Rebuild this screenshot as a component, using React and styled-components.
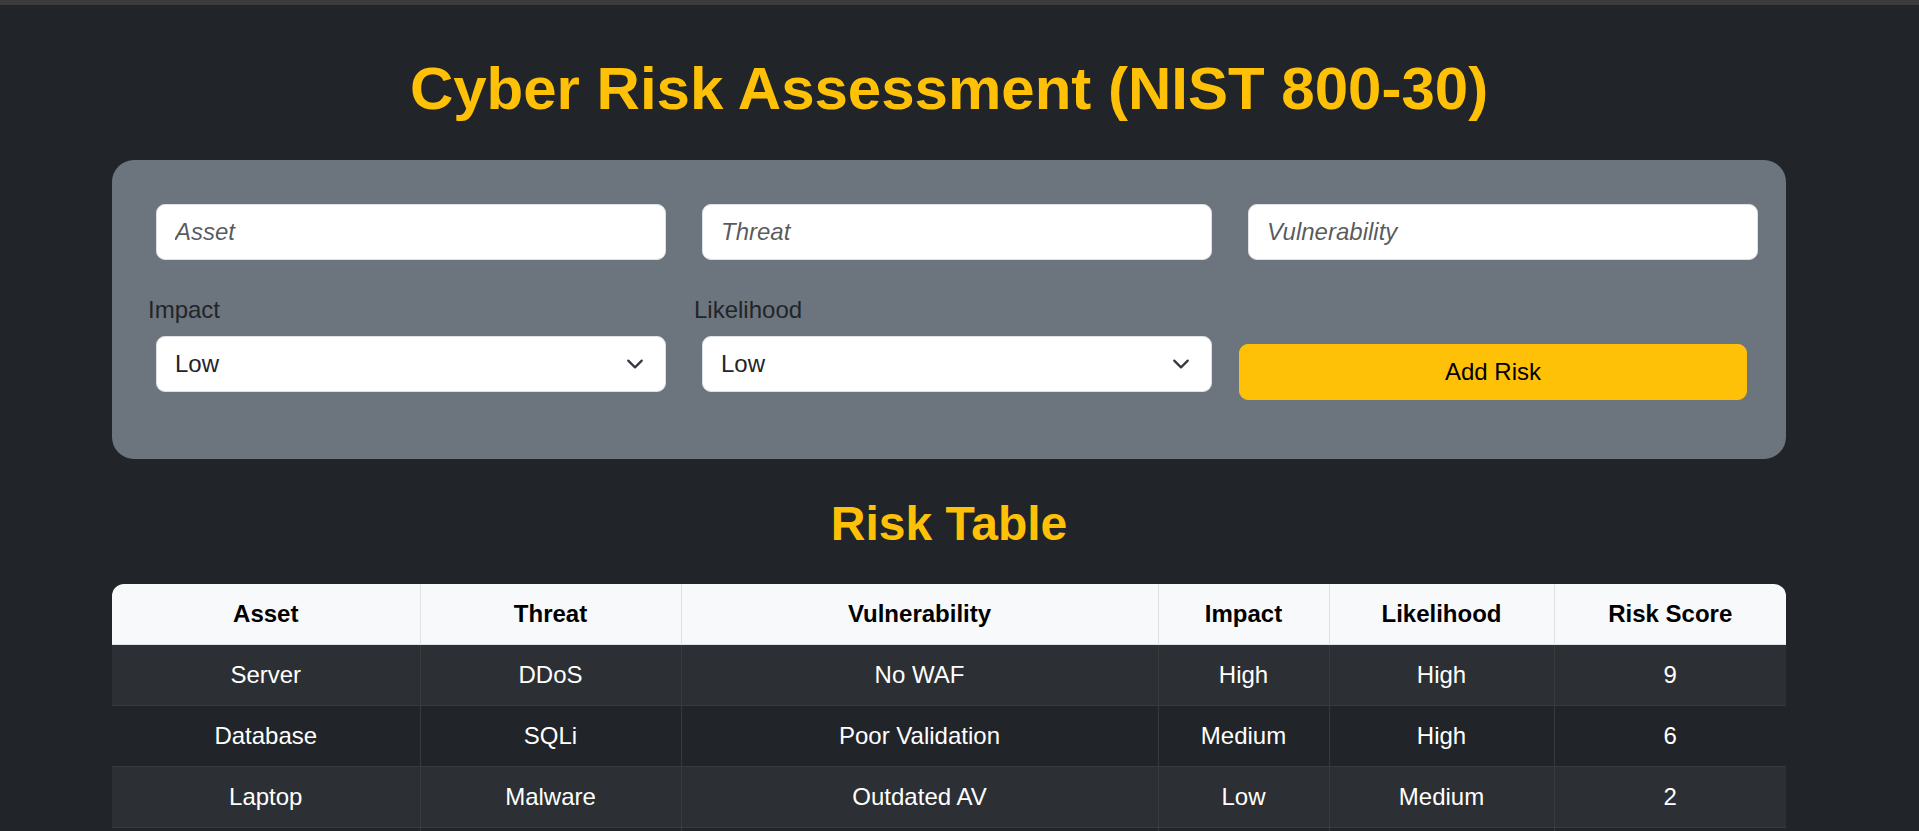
import React from "react";
import styled, { createGlobalStyle } from "styled-components";

const GlobalStyle = createGlobalStyle`
  html {
    color-scheme: dark;
    background: #212529;
  }
  body {
    margin: 0;
    background: #212529;
    font-family: "Liberation Sans", Arial, Helvetica, sans-serif;
  }
  *, *::before, *::after {
    box-sizing: border-box;
  }
`;

const Page = styled.div`
  min-height: 1776px;
  border-top: 5px solid #3c3c3c;
  background: #212529;
`;

const Container = styled.main`
  width: 1674px;
  margin-left: 112px;
`;

const Title = styled.h1`
  margin: 48px 0 35px;
  font-size: 60px;
  line-height: 72px;
  font-weight: 700;
  color: #ffc107;
  text-align: center;
`;

const Panel = styled.section`
  background: #6c757d;
  border-radius: 22px;
  padding: 36px 36px 59px;
`;

const FormGrid = styled.div`
  display: grid;
  grid-template-columns: repeat(3, 1fr);
  column-gap: 36px;
  row-gap: 24px;
  align-items: end;
`;

const controlBase = `
  display: block;
  width: 100%;
  height: 56px;
  padding: 9px 18px;
  font-family: "Liberation Sans", Arial, Helvetica, sans-serif;
  font-size: 24px;
  line-height: 36px;
  color: #212529;
  background: #ffffff;
  border: 1px solid #dee2e6;
  border-radius: 9px;
  outline: none;
  color-scheme: light;
`;

const TextInput = styled.input`
  ${controlBase}
  margin: 8px;
  &::placeholder {
    color: rgba(33, 37, 41, 0.75);
    font-style: italic;
  }
`;

const Field = styled.div`
  display: flex;
  flex-direction: column;
`;

const Label = styled.label`
  font-size: 24px;
  line-height: 36px;
  color: #212529;
`;

const SelectBox = styled.div`
  position: relative;
  width: 100%;
  margin: 8px;
`;

const Select = styled.select`
  ${controlBase}
  appearance: none;
  -webkit-appearance: none;
  padding-right: 54px;
`;

const Chevron = styled.svg`
  position: absolute;
  right: 19px;
  top: 50%;
  transform: translateY(-50%);
  pointer-events: none;
`;

const AddButton = styled.button`
  display: block;
  width: calc(100% - 2px);
  height: 56px;
  margin-left: -1px;
  padding: 9px 18px;
  font-family: "Liberation Sans", Arial, Helvetica, sans-serif;
  font-size: 24px;
  line-height: 36px;
  color: #000000;
  background: #ffc107;
  border: 1px solid #ffc107;
  border-radius: 9px;
  cursor: pointer;
`;

const SectionTitle = styled.h2`
  margin: 36px 0 31px;
  font-size: 48px;
  line-height: 57.6px;
  font-weight: 700;
  color: #ffc107;
  text-align: center;
`;

const TableWrap = styled.div`
  border-radius: 12px;
  overflow: hidden;
`;

const Table = styled.table`
  width: 100%;
  border-collapse: collapse;
  table-layout: fixed;
`;

const Col = styled.col`
  width: ${(p) => p.$w}px;
`;

const Th = styled.th`
  padding: 12px;
  font-size: 24px;
  line-height: 36px;
  font-weight: 700;
  color: #000000;
  background: #f8f9fa;
  border: 1px solid #dee2e6;
  border-top: none;
  text-align: center;
  &:first-child { border-left: none; }
  &:last-child { border-right: none; }
`;

const Tr = styled.tr`
  background: ${(p) => (p.$striped ? "#2c3034" : "#212529")};
`;

const Td = styled.td`
  padding: 12px;
  font-size: 24px;
  line-height: 36px;
  color: #ffffff;
  border: 1px solid #373b3e;
  text-align: center;
  &:first-child { border-left: none; }
  &:last-child { border-right: none; }
`;

const columns = [
  { name: "Asset", w: 308 },
  { name: "Threat", w: 261 },
  { name: "Vulnerability", w: 477 },
  { name: "Impact", w: 171 },
  { name: "Likelihood", w: 225 },
  { name: "Risk Score", w: 232 },
];

const risks = [
  ["Server", "DDoS", "No WAF", "High", "High", "9"],
  ["Database", "SQLi", "Poor Validation", "Medium", "High", "6"],
  ["Laptop", "Malware", "Outdated AV", "Low", "Medium", "2"],
  ["Email", "Phishing", "No MFA", "Medium", "Medium", "4"],
];

function LevelSelect({ id }) {
  return (
    <SelectBox>
      <Select id={id} defaultValue="Low">
        <option>Low</option>
        <option>Medium</option>
        <option>High</option>
      </Select>
      <Chevron width="24" height="18" viewBox="0 0 16 16" aria-hidden="true">
        <path
          d="m2 5 6 6 6-6"
          fill="none"
          stroke="#343a40"
          strokeWidth="2"
          strokeLinecap="round"
          strokeLinejoin="round"
        />
      </Chevron>
    </SelectBox>
  );
}

export default function App() {
  return (
    <>
      <GlobalStyle />
      <Page>
        <Container>
          <Title>Cyber Risk Assessment (NIST 800-30)</Title>
          <Panel>
            <FormGrid>
              <TextInput placeholder="Asset" />
              <TextInput placeholder="Threat" />
              <TextInput placeholder="Vulnerability" />
              <Field>
                <Label htmlFor="impact">Impact</Label>
                <LevelSelect id="impact" />
              </Field>
              <Field>
                <Label htmlFor="likelihood">Likelihood</Label>
                <LevelSelect id="likelihood" />
              </Field>
              <AddButton type="button">Add Risk</AddButton>
            </FormGrid>
          </Panel>
          <SectionTitle>Risk Table</SectionTitle>
          <TableWrap>
            <Table>
              <colgroup>
                {columns.map((c) => (
                  <Col key={c.name} $w={c.w} />
                ))}
              </colgroup>
              <thead>
                <tr>
                  {columns.map((c) => (
                    <Th key={c.name}>{c.name}</Th>
                  ))}
                </tr>
              </thead>
              <tbody>
                {risks.map((r, i) => (
                  <Tr key={r[0]} $striped={i % 2 === 0}>
                    {r.map((cell, j) => (
                      <Td key={j}>{cell}</Td>
                    ))}
                  </Tr>
                ))}
              </tbody>
            </Table>
          </TableWrap>
        </Container>
      </Page>
    </>
  );
}
